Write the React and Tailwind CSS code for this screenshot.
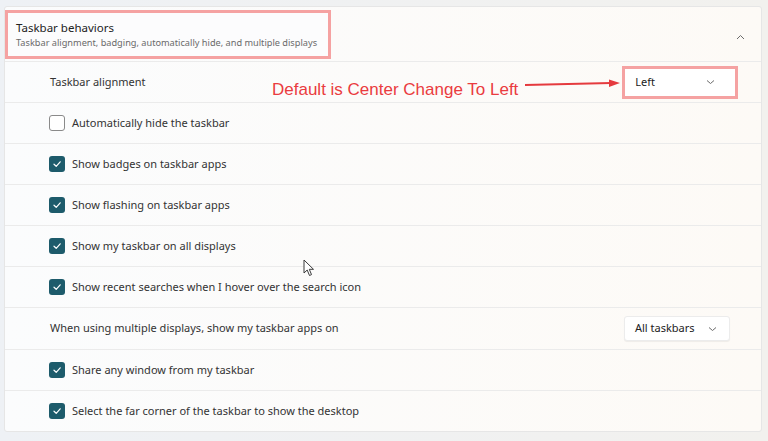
import React from "react";

const font = { fontFamily: '"Noto Sans", "Open Sans", sans-serif' };

function Check({ checked }) {
  if (!checked) {
    return <div className="w-[16px] h-[16px] rounded-[3px] border border-[#8a8a8a] bg-white shrink-0" />;
  }
  return (
    <div className="w-[16px] h-[16px] rounded-[3px] bg-[#1d5b6b] flex items-center justify-center shrink-0">
      <svg width="10" height="10" viewBox="0 0 10 10" fill="none">
        <path d="M2 5.2 L4.2 7.3 L8.2 2.8" stroke="#ffffff" strokeWidth="1.2" strokeLinecap="round" strokeLinejoin="round" />
      </svg>
    </div>
  );
}

function CheckRow({ label, checked = true }) {
  return (
    <div className="h-[41px] border-t border-[#ebebeb] flex items-center pl-[44px] gap-[7px]">
      <Check checked={checked} />
      <span className="text-[11px] text-[#333] whitespace-nowrap">{label}</span>
    </div>
  );
}

function Chevron({ up }) {
  return (
    <svg width="9" height="6" viewBox="0 0 9 6" fill="none">
      <path d={up ? "M1 5 L4.5 1.5 L8 5" : "M1 1.5 L4.5 4.5 L8 1.5"} stroke="#6b6b6b" strokeWidth="1" />
    </svg>
  );
}

export default function App() {
  return (
    <div
      className="relative w-[768px] h-[441px] overflow-hidden bg-gradient-to-r from-[#eef1f5] to-[#f2f1ee] pt-[6px] px-[4px]"
      style={font}
    >
      <div className="w-[758px] border border-[#e6e6e6] rounded-[3px] bg-gradient-to-r from-[#fbfcfd] to-[#fdfaf6]">
        {/* header */}
        <div className="h-[54px] flex items-start pt-[3px] pr-[16px]">
          <div className="w-[326px] h-[49px] border-[3px] border-[#f5a2a2] bg-[#fcfcfd] flex flex-col justify-center pl-[8px]">
            <div className="text-[11.5px] text-[#222] leading-[16px] whitespace-nowrap">Taskbar behaviors</div>
            <div className="text-[9.2px] text-[#6a6a6a] leading-[14px] whitespace-nowrap">
              Taskbar alignment, badging, automatically hide, and multiple displays
            </div>
          </div>
          <div className="ml-auto mt-[24px]">
            <Chevron up />
          </div>
        </div>

        {/* alignment row */}
        <div className="h-[41px] border-t border-[#ebebeb] flex items-center pl-[45px]">
          <span className="w-[222px] text-[11px] text-[#333]">Taskbar alignment</span>
          <span
            className="text-[17px] text-[#ea3b40] mt-[16px] whitespace-nowrap"
            style={{ fontFamily: '"Liberation Sans", Arial, sans-serif' }}
          >
            Default is Center Change To Left
          </span>
          <svg width="96" height="12" viewBox="0 0 96 12" className="ml-[7px] mt-[4px] shrink-0">
            <path d="M0 7 L86 5" stroke="#e53a3e" strokeWidth="2.2" />
            <path d="M84 1.5 L95 5 L84 9 Z" fill="#e53a3e" />
          </svg>
          <div className="ml-[1px] w-[116px] h-[33px] border-[3px] border-[#f5a2a2] bg-white flex items-center pl-[10px] pr-[20px] shrink-0">
            <span className="text-[11px] text-[#222]">Left</span>
            <span className="ml-auto">
              <Chevron />
            </span>
          </div>
        </div>

        <CheckRow label="Automatically hide the taskbar" checked={false} />
        <CheckRow label="Show badges on taskbar apps" />
        <CheckRow label="Show flashing on taskbar apps" />
        <CheckRow label="Show my taskbar on all displays" />
        <CheckRow label="Show recent searches when I hover over the search icon" />

        <div className="h-[42px] border-t border-[#ebebeb] flex items-center pl-[45px] pr-[31px]">
          <span className="text-[11px] text-[#333]">When using multiple displays, show my taskbar apps on</span>
          <div className="ml-auto w-[106px] h-[25px] bg-white rounded-[3px] border border-[#ececec] shadow-[0_1px_1px_rgba(0,0,0,0.06)] flex items-center pl-[10px] pr-[12px]">
            <span className="text-[11px] text-[#222]">All taskbars</span>
            <span className="ml-auto">
              <Chevron />
            </span>
          </div>
        </div>

        <CheckRow label="Share any window from my taskbar" />
        <CheckRow label="Select the far corner of the taskbar to show the desktop" />
      </div>

      {/* mouse cursor */}
      <svg className="absolute left-[303px] top-[259px]" width="12" height="18" viewBox="0 0 12 18">
        <path d="M1 1 L1 14 L4.2 11 L6.5 16.5 L8.5 15.6 L6.3 10.3 L10.5 10.3 Z" fill="#ffffff" stroke="#3a3a3a" strokeWidth="1" strokeLinejoin="round" />
      </svg>
    </div>
  );
}
